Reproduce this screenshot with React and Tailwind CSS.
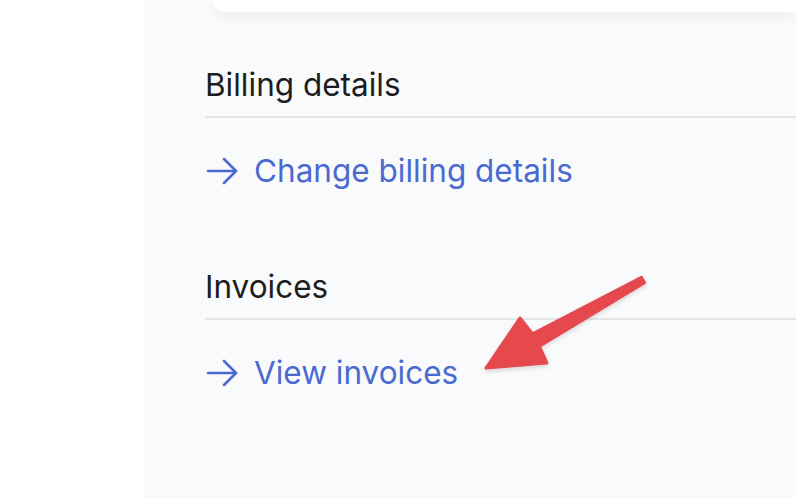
import React from 'react'

function ArrowIcon() {
  return (
    <svg width="34" height="34" viewBox="0 0 34 34" fill="none" stroke="currentColor" strokeWidth="2.6" strokeLinecap="round" strokeLinejoin="round">
      <path d="M3 17h28" />
      <path d="M19 5l12 12-12 12" />
    </svg>
  )
}

function Section({ title, link }) {
  return (
    <div>
      <h2 className="text-[31.5px] leading-[38px] text-[#1d1d1f]">{title}</h2>
      <div className="mt-[12px] h-[2px] bg-[#e4e5e8]" />
      <a className="mt-[34px] flex h-[38px] items-center gap-[15px] text-[#4a6ad0]">
        <ArrowIcon />
        <span className="text-[31.5px] leading-[38px]">{link}</span>
      </a>
    </div>
  )
}

export default function App() {
  return (
    <div className="flex h-[498px] w-[796px] overflow-hidden bg-white" style={{ fontFamily: 'Inter, "Noto Sans", sans-serif' }}>
      <div className="w-[144px] shrink-0 bg-white" />
      <div className="relative flex-1 bg-[#f9fafc]">
        <div className="ml-[69px] h-[12px] rounded-bl-[18px] bg-white shadow-[0_4px_14px_rgba(0,0,0,0.06)]" />
        <div className="flex flex-col gap-[78px] pl-[61px] pt-[54px]">
          <Section title="Billing details" link="Change billing details" />
          <Section title="Invoices" link="View invoices" />
        </div>
        <svg className="absolute left-0 top-0" width="652" height="498" viewBox="144 0 652 498">
          <defs>
            <filter id="sh" x="-20%" y="-20%" width="140%" height="140%">
              <feDropShadow dx="0" dy="2" stdDeviation="2" floodColor="#000" floodOpacity="0.15" />
            </filter>
          </defs>
          <polygon
            points="641.5,277.4 532.6,333.9 520,318 486,368 547,363 539.4,346.1 644.5,282.6"
            fill="#e5484d"
            stroke="#e5484d"
            strokeWidth="3"
            strokeLinejoin="round"
            filter="url(#sh)"
          />
        </svg>
      </div>
    </div>
  )
}
